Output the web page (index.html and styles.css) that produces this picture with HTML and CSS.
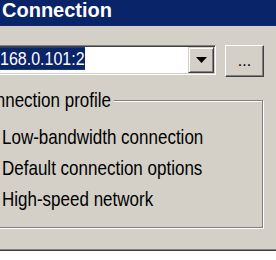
FILE: index.html
```html
<!DOCTYPE html>
<html lang="en">
<head>
    <meta charset="UTF-8">
    <meta name="viewport" content="width=device-width, initial-scale=1.0">
    <title>Connection</title>
    <link rel="stylesheet" href="styles.css">
</head>
<body>

    <div class="window">
        <div class="titlebar">Connection</div>
        <div class="content">
            <div class="address-row">
                <div class="combo">
                    <span class="combo-text">168.0.101:2</span>
                    <span class="combo-btn">
                        <svg width="11" height="6" viewBox="0 0 11 6"><path d="M0 0h11L5.5 6z" fill="#000"/></svg>
                    </span>
                </div>
                <button class="browse">...</button>
            </div>

            <div class="group">
                <span class="group-label"><span class="tall">Connection profile</span></span>
                <label class="option"><span class="radio"></span><span class="tall">Low-bandwidth connection</span></label>
                <label class="option"><span class="radio"></span><span class="tall">Default connection options</span></label>
                <label class="option"><span class="radio"></span><span class="tall">High-speed network</span></label>
            </div>
        </div>
    </div>

</body>
</html>
```

FILE: styles.css
```css
html, body {
    margin: 0;
    width: 276px;
    height: 260px;
    overflow: hidden;
    background: #fff;
}
.window {
    margin-left: -60px;
    width: 360px;
    height: 249px;
    background: #d4d0c8;
    border-bottom: 1px solid #808080;
    box-shadow: 0 1px 0 #404040;
    font-family: "Liberation Sans", Arial, sans-serif;
    font-size: 17px;
    color: #000;
}
/* the dialog font is a tall, narrow one */
.tall {
    display: inline-block;
    line-height: 20px;
    transform: scaleY(1.2);
}
.titlebar {
    height: 26px;
    box-sizing: border-box;
    padding-left: 62px;
    background: #0a246a;
    color: #fff;
    font-weight: bold;
    font-size: 20px;
    line-height: 21px;
    border-bottom: 1px solid #0d2a72;
}
.content {
    padding-top: 19px;
}
.address-row {
    display: flex;
    align-items: flex-start;
}
.combo {
    display: flex;
    align-items: flex-start;
    width: 276px;
    height: 30px;
    box-sizing: border-box;
    padding: 1px;
    background: #fff;
    border-top: 1px solid #808080;
    border-left: 1px solid #808080;
    border-right: 1px solid #fff;
    border-bottom: 1px solid #fff;
    box-shadow: inset 1px 1px 0 #404040, inset -1px -1px 0 #d4d0c8;
}
.combo-text {
    margin: 2px 0 0 58px;
    font-size: 16px;
    line-height: 19px;
    background: #0a246a;
    color: #fff;
    transform: scaleY(1.2);
}
.combo-btn {
    margin-left: auto;
    width: 26px;
    height: 26px;
    box-sizing: border-box;
    display: flex;
    align-items: center;
    justify-content: center;
    background: #d4d0c8;
    border: 1px solid;
    border-color: #d4d0c8 #404040 #404040 #d4d0c8;
    box-shadow: inset 1px 1px 0 #fff, inset -1px -1px 0 #808080;
}
.browse {
    margin-left: 9px;
    width: 39px;
    height: 32px;
    padding: 0;
    background: #d4d0c8;
    border: 1px solid;
    border-color: #fff #404040 #404040 #fff;
    box-shadow: inset -1px -1px 0 #808080;
    font-family: "Liberation Sans", Arial, sans-serif;
    font-size: 16px;
    color: #000;
}
.group {
    position: relative;
    margin: 23px 0 0 10px;
    width: 313px;
    height: 128px;
    box-sizing: border-box;
    padding: 21px 0 0 24px;
    border: 1px solid #808080;
    box-shadow: inset 1px 1px 0 #fff, 1px 1px 0 #fff;
}
.group-label {
    position: absolute;
    top: -10px;
    left: 20px;
    padding: 0 3px;
    background: #d4d0c8;
    line-height: 20px;
}
.option {
    display: flex;
    align-items: center;
    height: 31px;
}
.radio {
    width: 20px;
    height: 20px;
    margin-right: 7px;
    box-sizing: border-box;
    border-radius: 50%;
    background: #fff;
    border: 2px solid #808080;
}
```
